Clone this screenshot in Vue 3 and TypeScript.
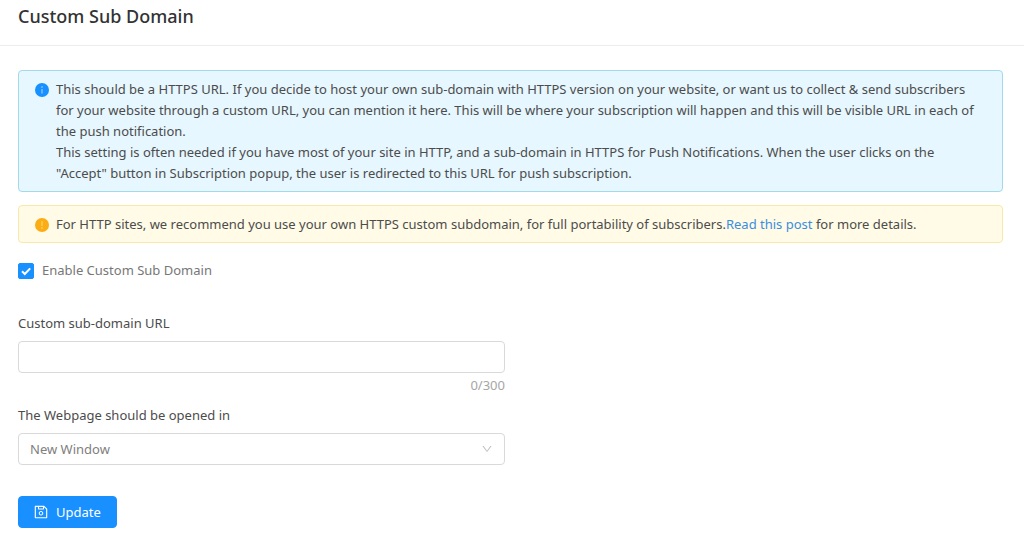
<script setup lang="ts">
import { ref } from 'vue'

const maxLength = 300
const enabled = ref<boolean>(true)
const url = ref<string>('')
const target = ref<string>('New Window')
const targets: string[] = ['New Window', 'Same Window']
</script>

<template>
  <main class="page">
    <header class="header">
      <h1 class="title">Custom Sub Domain</h1>
    </header>

    <form class="content" @submit.prevent>
      <div class="alert info">
        <svg class="alert-icon" viewBox="0 0 14 14" aria-hidden="true">
          <circle cx="7" cy="7" r="7" fill="#1890ff" />
          <circle cx="7" cy="4" r="0.8" fill="#a6d8ff" />
          <path d="M7 6v4.6" stroke="#a6d8ff" stroke-width="1" />
        </svg>
        <p class="alert-text">
          This should be a HTTPS URL. If you decide to host your own sub-domain with HTTPS version on your website, or want us to collect &amp; send subscribers for your website through a custom URL, you can mention it here. This will be where your subscription will happen and this will be visible URL in each of the push notification.<br />
          This setting is often needed if you have most of your site in HTTP, and a sub-domain in HTTPS for Push Notifications. When the user clicks on the "Accept" button in Subscription popup, the user is redirected to this URL for push subscription.
        </p>
      </div>

      <div class="alert warning">
        <svg class="alert-icon" viewBox="0 0 14 14" aria-hidden="true">
          <circle cx="7" cy="7" r="7" fill="#faad14" />
          <path d="M7 3.2v4.8" stroke="#ffdc80" stroke-width="1" />
          <circle cx="7" cy="10" r="0.8" fill="#ffdc80" />
        </svg>
        <p class="alert-text">
          For HTTP sites, we recommend you use your own HTTPS custom subdomain, for full portability of subscribers.<a href="#">Read this post</a> for more details.
        </p>
      </div>

      <label class="check">
        <input v-model="enabled" type="checkbox" class="check-box" />
        <svg class="check-mark" viewBox="0 0 16 16" aria-hidden="true">
          <path d="M4 8.2l2.8 2.8L12.2 5.4" fill="none" stroke="#fff" stroke-width="2" />
        </svg>
        <span>Enable Custom Sub Domain</span>
      </label>

      <div class="field">
        <label class="label" for="url">Custom sub-domain URL</label>
        <input id="url" v-model="url" class="control" type="text" :maxlength="maxLength" />
        <span class="count">{{ url.length }}/{{ maxLength }}</span>
      </div>

      <div class="field">
        <label class="label" for="target">The Webpage should be opened in</label>
        <div class="select-wrap">
          <select id="target" v-model="target" class="control select">
            <option v-for="t in targets" :key="t">{{ t }}</option>
          </select>
          <svg class="arrow" viewBox="0 0 1024 1024" aria-hidden="true">
            <path fill="currentColor" d="M884 256h-75c-5.1 0-9.9 2.5-12.9 6.6L512 654.2 227.9 262.6c-3-4.1-7.8-6.6-12.9-6.6h-75c-6.5 0-10.3 7.4-6.5 12.7l352.6 486.1c12.8 17.6 39 17.6 51.7 0l352.6-486.1c3.9-5.3.1-12.7-6.4-12.7z" />
          </svg>
        </div>
      </div>

      <button type="submit" class="submit">
        <svg class="save" viewBox="64 64 896 896" aria-hidden="true">
          <path fill="currentColor" d="M893.3 293.3L730.7 130.7c-7.5-7.5-16.7-13-26.7-16V112H144c-17.7 0-32 14.3-32 32v736c0 17.7 14.3 32 32 32h736c17.7 0 32-14.3 32-32V338.5c0-17-6.7-33.2-18.7-45.2zM384 184h256v104H384V184zm456 656H184V184h136v136c0 17.7 14.3 32 32 32h320c17.7 0 32-14.3 32-32V205.8l136 136V840zM512 442c-79.5 0-144 64.5-144 144s64.5 144 144 144 144-64.5 144-144-64.5-144-144-144zm0 224c-44.2 0-80-35.8-80-80s35.8-80 80-80 80 35.8 80 80-35.8 80-80 80z" />
        </svg>
        <span>Update</span>
      </button>
    </form>
  </main>
</template>

<style>
body {
  margin: 0;
  background: #fff;
}
</style>

<style scoped>
.page {
  font-family: "Noto Sans", "Open Sans", sans-serif;
  font-size: 13px;
  line-height: 21px;
  color: #4c4c4c;
}
.header {
  padding: 4px 18px 17px;
  border-bottom: 1px solid #ececec;
}
.title {
  margin: 0;
  font-size: 18px;
  line-height: 24px;
  font-weight: 500;
  color: #333;
}
.content {
  padding: 24px 21px 4px 18px;
}
.alert {
  display: flex;
  align-items: flex-start;
  gap: 7px;
  padding: 8px 16px 7px;
  border: 1px solid;
  border-radius: 4px;
  margin-bottom: 13px;
}
.info {
  background: #e6f7ff;
  border-color: #a3daea;
}
.warning {
  background: #fffbe6;
  border-color: #f8e9a8;
}
.alert-icon {
  flex: none;
  width: 14px;
  height: 14px;
  margin-top: 4px;
}
.alert-text {
  margin: 0;
}
a {
  color: #3a8ee0;
  text-decoration: none;
}
.check {
  display: flex;
  width: fit-content;
  align-items: center;
  gap: 8px;
  margin: 17px 0 32px;
  color: #777;
  position: relative;
}
.check-box {
  appearance: none;
  width: 16px;
  height: 16px;
  margin: 0;
  border: 1px solid #d9d9d9;
  border-radius: 2px;
}
.check-box:checked {
  background: #1890ff;
  border-color: #1890ff;
}
.check-mark {
  position: absolute;
  left: 0;
  width: 16px;
  height: 16px;
  pointer-events: none;
}
.field {
  display: flex;
  flex-direction: column;
  gap: 7px;
  width: 50%;
  max-width: 487px;
  margin-bottom: 9px;
}
.control {
  box-sizing: border-box;
  width: 100%;
  height: 32px;
  padding: 0 11px;
  border: 1px solid #d9d9d9;
  border-radius: 4px;
  background: #fff;
  font: inherit;
  color: #808080;
}
.count {
  margin-top: -5px;
  text-align: right;
  color: #a6a6a6;
}
.select-wrap {
  position: relative;
}
.select {
  display: block;
  appearance: none;
}
.arrow {
  position: absolute;
  right: 12px;
  top: 10px;
  width: 12px;
  height: 12px;
  color: #bfbfbf;
  pointer-events: none;
}
.submit {
  display: flex;
  align-items: center;
  gap: 8px;
  height: 32px;
  margin-top: 31px;
  padding: 0 15px;
  border: 1px solid #1890ff;
  border-radius: 4px;
  background: #1890ff;
  color: #fff;
  font: inherit;
}
.save {
  width: 14px;
  height: 14px;
}
</style>
